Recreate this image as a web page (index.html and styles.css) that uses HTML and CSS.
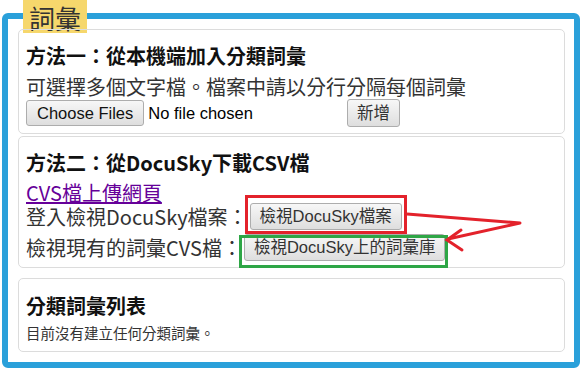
FILE: index.html
```html
<!DOCTYPE html>
<html lang="zh-Hant">
<head>
    <meta charset="UTF-8">
    <meta name="viewport" content="width=device-width, initial-scale=1.0">
    <title>詞彙</title>
    <link rel="stylesheet" href="styles.css">
</head>
<body>
    <div class="panel">
        <span class="panel-title">詞彙</span>

        <section class="card card-local">
            <h3>方法一：從本機端加入分類詞彙</h3>
            <p class="hint">可選擇多個文字檔。檔案中請以分行分隔每個詞彙</p>
            <div class="file-row">
                <input type="file" class="file-input" multiple>
                <button class="btn">新增</button>
            </div>
        </section>

        <section class="card card-docusky">
            <h3>方法二：從DocuSky下載CSV檔</h3>
            <a href="#" class="upload-link">CVS檔上傳網頁</a>
            <div class="row">
                <span>登入檢視DocuSky檔案：</span>
                <span class="mark mark-red"><button class="btn">檢視DocuSky檔案</button></span>
            </div>
            <div class="row">
                <span>檢視現有的詞彙CVS檔：</span>
                <span class="mark mark-green"><button class="btn">檢視DocuSky上的詞彙庫</button></span>
            </div>

            <!-- 標註箭頭 -->
            <svg class="arrow" width="130" height="55" viewBox="0 0 130 55">
                <path d="M7 13 L120 22 L48 38" fill="none" stroke="#e3222b" stroke-width="3" stroke-linejoin="round"/>
                <path d="M61 29 L47 39 L62 49" fill="none" stroke="#e3222b" stroke-width="3" stroke-linecap="round"/>
            </svg>
        </section>

        <section class="card card-list">
            <h3>分類詞彙列表</h3>
            <p class="empty">目前沒有建立任何分類詞彙。</p>
        </section>
    </div>
</body>
</html>
```

FILE: styles.css
```css
* {
    margin: 0;
    padding: 0;
    box-sizing: border-box;
}

body {
    background: #fff;
    font-family: "Noto Sans CJK TC", "Liberation Sans", sans-serif;
    color: #333;
    padding: 0 8px 0 2px;
}

/* 外框 */
.panel {
    position: relative;
    margin-top: 13px;
    border: 6px solid #2aa0da;
    border-radius: 6px;
    padding: 10px 9px 10px 10px;
}

.panel-title {
    position: absolute;
    top: -19px;
    left: 15px;
    height: 33px;
    background: #f6d76c;
    color: #333;
    font-size: 26px;
    line-height: 31px;
    padding: 2px 6px 0;
}

/* 卡片 */
.card {
    position: relative;
    border: 1px solid #dcdcdc;
    border-radius: 5px;
    padding: 14px 8px 6px 7px;
}

.card h3 {
    font-size: 20px;
    line-height: 24px;
    font-weight: bold;
    color: #111;
}

.card-local {
    margin-bottom: 2px;
}

.card-local h3 {
    margin-bottom: 7px;
}

.hint {
    font-size: 20px;
    line-height: 24px;
}

.file-row {
    display: flex;
    align-items: center;
    gap: 3px;
    height: 28px;
}

.file-input {
    width: 318px;
    height: 26px;
    font-family: "Liberation Sans", sans-serif;
    font-size: 16.5px;
    color: #000;
}

.file-input::file-selector-button {
    height: 26px;
    padding: 0 10px;
    margin-right: 4px;
    font-family: "Liberation Sans", sans-serif;
    font-size: 16.5px;
    color: #111;
    background: linear-gradient(#f7f7f7, #dedede);
    border: 1px solid #adadad;
    border-radius: 3px;
}

.btn {
    height: 27px;
    padding: 0 9px;
    font-family: "Liberation Sans", "Noto Sans CJK TC", sans-serif;
    font-size: 16.5px;
    line-height: 25px;
    color: #333;
    background: linear-gradient(#f7f7f7, #dedede);
    border: 1px solid #adadad;
    border-radius: 3px;
}

.file-row .btn {
    height: 28px;
}

/* 方法二 */
.card-docusky {
    margin-bottom: 10px;
}

.upload-link {
    display: block;
    margin-top: 7px;
    font-size: 20px;
    line-height: 21px;
    color: #660099;
    width: max-content;
}

.row {
    display: flex;
    align-items: center;
    gap: 2px;
    height: 27px;
    font-size: 20px;
    line-height: 24px;
}

.row + .row {
    margin-top: 4px;
}

.mark {
    position: relative;
    display: inline-flex;
}

.mark::after {
    content: "";
    position: absolute;
    border: 3px solid;
    pointer-events: none;
}

.mark-red::after {
    top: -8px;
    left: -5px;
    right: -5px;
    bottom: -4px;
    border-color: #e3222b;
}

.mark-green::after {
    top: 1px;
    left: -5px;
    right: -3px;
    bottom: -7px;
    border-color: #2ea646;
}

.arrow {
    position: absolute;
    left: 381px;
    top: 64px;
}

/* 列表 */
.card-list {
    padding: 15px 8px 9px 7px;
}

.card-list h3 {
    margin-bottom: 6px;
}

.empty {
    font-size: 14.5px;
    line-height: 18px;
}
```
